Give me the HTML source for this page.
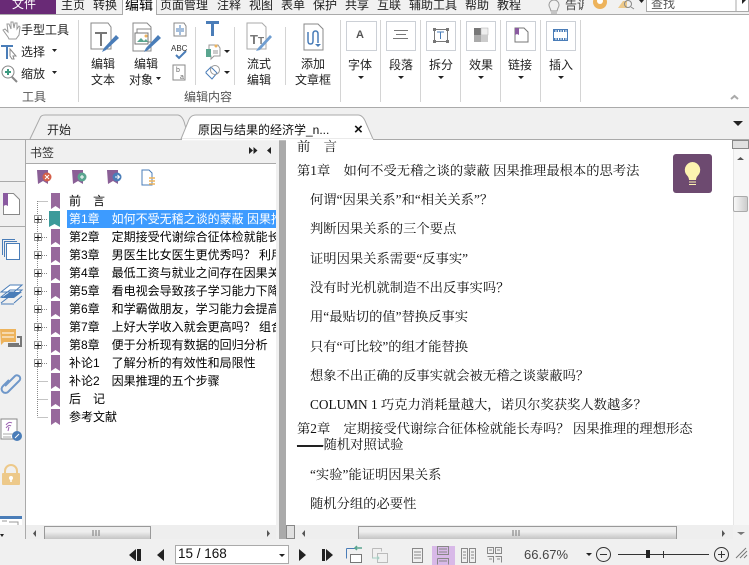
<!DOCTYPE html>
<html lang="zh"><head><meta charset="utf-8">
<style>
html,body{margin:0;padding:0;width:749px;height:565px;overflow:hidden;background:#f0f0f0}
#r{position:relative;width:749px;height:565px;overflow:hidden;font-family:"Liberation Sans","WenQuanYi Zen Hei","Noto Sans CJK SC",sans-serif;font-size:12px;color:#222}
.t{position:absolute;white-space:pre;line-height:14px;height:14px}
.c{transform:translateX(-50%)}
.b{position:absolute;background:#f0f0f0}
.p{font-family:"Liberation Serif","Noto Serif CJK SC",serif;font-size:13.3px;color:#111;line-height:16px;height:16px}
.k{color:#000;font-size:12px}
svg{position:absolute;left:0;top:0}
</style></head><body><div id="r">
<div class="b" style="left:0;top:0;width:749px;height:14px;background:#f1f1f1"></div>
<div class="b" style="left:0;top:14px;width:749px;height:1px;background:#aaa"></div>
<div class="b" style="left:0;top:0;width:56px;height:14px;background:#692a76"></div>
<div class="b" style="left:122px;top:0;width:35px;height:15px;background:#fff;border:solid #aaa;border-width:0 1px;box-sizing:border-box"></div>
<div class="b" style="left:0;top:15px;width:749px;height:92px;background:#fff"></div>
<div class="b" style="left:0;top:107px;width:749px;height:1px;background:#aaa"></div>
<div class="b" style="left:0;top:139px;width:749px;height:1px;background:#aaa"></div>
<div class="b" style="left:26px;top:164px;width:250px;height:361px;background:#fff"></div>
<div class="b" style="left:25px;top:139px;width:1px;height:400px;background:#aaa"></div>
<div class="b" style="left:26px;top:163px;width:250px;height:1px;background:#aaa"></div>
<div class="b" style="left:0;top:181px;width:26px;height:1px;background:#aaa"></div>
<div class="b" style="left:0;top:226px;width:26px;height:1px;background:#aaa"></div>
<div class="b" style="left:279px;top:140px;width:7px;height:399px;background:#aaa"></div>
<div class="b" style="left:286px;top:140px;width:447px;height:385px;background:#fff"></div>
<div class="b" style="left:67px;top:210px;width:209px;height:18px;background:#3d9bff"></div>
<div class="b" style="left:733px;top:140px;width:16px;height:385px;background:#f7f7f7;border-left:1px solid #e6e6e6;box-sizing:border-box"></div>
<div class="b" style="left:732px;top:140px;width:17px;height:9px;background:#e0e0e0;border:1px solid #888;box-sizing:border-box"></div>
<div class="b" style="left:733px;top:196px;width:15px;height:16px;background:linear-gradient(90deg,#f8f8f8,#ccc);border:1px solid #aaa;box-sizing:border-box;border-radius:2px"></div>
<div class="b" style="left:26px;top:525px;width:250px;height:14px;background:#eee"></div>
<div class="b" style="left:44px;top:526px;width:107px;height:13px;background:linear-gradient(#eee,#eee 40%,#c4c4c4);border:solid #999;border-width:1px 1px 0;box-sizing:border-box"></div>
<div class="b" style="left:286px;top:525px;width:463px;height:14px;background:#eee"></div>
<div class="b" style="left:286px;top:525px;width:9px;height:14px;background:#e0e0e0;border:1px solid #888;box-sizing:border-box"></div>
<div class="b" style="left:358px;top:526px;width:319px;height:13px;background:linear-gradient(#eee,#eee 40%,#c4c4c4);border:solid #999;border-width:1px 1px 0;box-sizing:border-box"></div>
<div class="b" style="left:733px;top:525px;width:16px;height:14px;background:#f0f0f0"></div>
<div class="b" style="left:432px;top:546px;width:23px;height:19px;background:#d8b9e8"></div>
<div class="b" style="left:175px;top:545px;width:114px;height:19px;background:#fff;border:1px solid #aaa;box-sizing:border-box"></div>
<div class="b" style="left:646px;top:0;width:103px;height:12px;background:#fff;border:solid #aaa;border-width:0 1px 1px;box-sizing:border-box"></div>

<svg width="749" height="565" viewBox="0 0 749 565" fill="none">
<!-- tabs -->
<path d="M30 139L40 118Q41 115 45 115H178Q183 116 185 125L186 128" stroke="#aaa" fill="#f0f0f0"/>
<path d="M181 139L188 122Q190 115 196 115H358Q363 115 366 123L373 139Z" stroke="#aaa" fill="#fff"/>
<path d="M182 139.500H373" stroke="#fff" stroke-width="1.500"/>
<path d="M733 121h10l-5 5z" fill="#222"/>
<!-- ribbon separators -->
<g stroke="#d4d4d4"><path d="M78.500 20V102M340.500 20V102M380.500 20V102M420.500 20V102M460.500 20V102M500.500 20V102M540.500 20V102M580.500 20V102"/><path d="M195.500 27V85M234.500 27V85M285.500 27V85"/></g>
<!-- hand -->
<path d="M8 37l-5-7 2-1 3 3-1-8 2 0 2 5 0-7 2 0 1 6 1-5 2 0 0 6 2-3 1 1-1 8-3 4h-7z" stroke="#999" fill="#fff"/>
<!-- T select -->
<path d="M1 45h12v2h-5v12h-2v-12h-5z" fill="#4a7db8"/><path d="M10 49l6 7-3 0 1 3-2 0-2-3z" stroke="#888" fill="#fff"/>
<!-- zoom -->
<circle cx="8" cy="72" r="6" stroke="#888" fill="#fff"/><path d="M5 72h6M8 69v6" stroke="#3d9a80" stroke-width="2"/><path d="M12 77l5 5" stroke="#888" stroke-width="2"/>
<!-- edit text -->
<path d="M91 23h17l3 4v22h-20z" stroke="#888" fill="#fff"/><path d="M95 32h12v2h-5v12h-2v-12h-5z" fill="#777"/>
<path d="M102 52l2-4 12-13 3 3-13 12z" fill="#4a7db8"/>
<!-- edit object -->
<path d="M133 23h14l4 4v24h-18z" stroke="#888" fill="#fff"/><path d="M137 29h14v13h-14z" stroke="#888" fill="#fff"/><path d="M135 33h13v11h-13z" stroke="#777" fill="#fff"/><path d="M137 42l4-4 3 3 2-2 2 3z" fill="#5aa58f"/><circle cx="146" cy="36" r="1.500" fill="#edb35c"/>
<path d="M144 52l2-4 12-13 3 3-13 12z" fill="#4a7db8"/>
<!-- small 3 -->
<path d="M174 23h10l2 3v10h-12z" stroke="#888" fill="#fff"/><path d="M176 29h8M176 31h8M180 25v3M180 32v3" stroke="#4a7db8"/>
<path d="M176 55l3 3 7-7" stroke="#4a7db8" stroke-width="2"/>
<text x="171" y="51" font-family="Liberation Sans" font-size="8" fill="#333">ABC</text>
<path d="M174 65h11v15h-12v-15z" stroke="#888" fill="#fff"/><text x="176" y="72" font-family="Liberation Sans" font-size="7" fill="#666">b</text><text x="180" y="79" font-family="Liberation Sans" font-size="7" fill="#666">a</text>
<!-- T big -->
<path d="M206 21h13v3h-5v12h-3v-12h-5z" fill="#4a7db8"/>
<path d="M209 45h9l2 3v8h-6l-3 3v-3h-2z" stroke="#999" fill="#fff"/><path d="M206 49h5v8h-5z" fill="#5aa58f"/><circle cx="216" cy="46" r="1.500" fill="#edb35c"/><path d="M213 51h5M213 53h5" stroke="#999"/>
<path d="M224 50h6l-3 3z" fill="#222"/>
<path d="M206 72l5-5 6 6-5 6-6-6z" stroke="#4a7db8" fill="#fff"/><circle cx="215" cy="70" r="4.500" stroke="#999"/>
<path d="M224 71h6l-3 3z" fill="#222"/>
<!-- flow -->
<path d="M247 23h15l4 4v22h-19z" stroke="#aaa" fill="#fff"/><text x="250" y="44" font-family="Liberation Sans" font-size="13" font-weight="bold" fill="#777">T</text><text x="258" y="44" font-family="Liberation Sans" font-size="10" font-weight="bold" fill="#777">T</text>
<path d="M256 51l2-3 12-13 2 2-12 13z" fill="#6f9dd0"/>
<!-- add text frame -->
<path d="M304 24h14l5 5v21h-19z" stroke="#888" fill="#fff"/><path d="M308 32v9q0 3 2.500 3t2.500-3v-7q0-3 2.500-3t2.500 3v9" stroke="#4a7db8" stroke-width="1.500"/><path d="M315 44h6l-3 3z" fill="#4a7db8"/>
<!-- ribbon box buttons -->
<g stroke="#ccd0d6" fill="#fff"><rect x="346.500" y="21.500" width="30" height="29"/><rect x="386.500" y="21.500" width="29" height="29"/><rect x="426.500" y="21.500" width="29" height="29"/><rect x="466.500" y="21.500" width="29" height="29"/><rect x="506.500" y="21.500" width="29" height="29"/><rect x="546.500" y="21.500" width="29" height="29"/></g>
<text x="356" y="38" font-family="Liberation Sans" font-size="11" font-weight="bold" fill="#555">A</text>
<path d="M394 30.500h14M396 34.500h10M393 38.500h15" stroke="#777"/>
<rect x="434.500" y="29.500" width="13" height="12" stroke="#777"/><path d="M433 28h3v3h-3zM446 28h3v3h-3zM433 40h3v3h-3zM446 40h3v3h-3z" fill="#777"/><path d="M437 32h7M440.500 32v7" stroke="#4a7db8"/>
<rect x="474" y="28" width="7" height="7" fill="#777"/><rect x="481" y="28" width="7" height="7" fill="#eee" stroke="#aaa" stroke-width=".5"/><rect x="474" y="35" width="7" height="7" fill="#aaa"/><rect x="481" y="35" width="7" height="7" fill="#ccc"/>
<path d="M515 28h9l4 4v10h-13z" stroke="#777" fill="#fff"/><path d="M515 28h4v7l-2-1-2 1z" fill="#8a5aa0"/>
<rect x="553.500" y="29.500" width="14" height="11" stroke="#4a7db8" fill="#fff"/><path d="M554 31h13M554 39h13" stroke="#4a7db8" stroke-width="2" stroke-dasharray="1.500 1"/>
<!-- dropdown arrows -->
<g fill="#222"><path d="M52 49h5l-2.500 3zM52 71h5l-2.500 3zM156 77h5l-2.500 3zM358 76h6l-3 3zM398 76h6l-3 3zM438 76h6l-3 3zM478 76h6l-3 3zM518 76h6l-3 3zM558 76h6l-3 3z"/></g>
<path d="M731 99l3.500-3 3.500 3" stroke="#aaa" stroke-width="2"/>
<!-- top right -->
<path d="M550 8a5 5 0 1 1 8 0l-1 3h-6zM551 13h6" stroke="#999"/>
<circle cx="600" cy="2" r="7" fill="#edb35c"/><circle cx="600" cy="1" r="3" fill="#fff"/>
<path d="M618 8l5-7h4v7z" fill="#edc98a"/><circle cx="628" cy="4" r="3.500" stroke="#888"/><path d="M631 7l3 2" stroke="#888"/><path d="M639 0h5l-2.500 3z" fill="#222"/>
<path d="M742 0h4l-4 4z" fill="#222"/>
<path d="M736 0v12" stroke="#aaa"/>
<!-- panel header -->
<path d="M249 147l4 3.500-4 3.500zM253.500 147l4 3.500-4 3.500zM271 147l-4 3.500 4 3.500z" fill="#222"/>
<!-- bookmark tool icons -->
<g fill="#8a5f96"><path d="M37 170h11v14l-5-3-5 3zM72 170h11v14l-5-3-5 3zM107 170h11v14l-5-3-5 3z"/></g>
<circle cx="47" cy="177" r="4.500" fill="#d5604a"/><path d="M45 175l4 4M49 175l-4 4" stroke="#fff"/>
<circle cx="82" cy="177" r="4.500" fill="#5aa58f"/><path d="M80 177h4M82 175v4" stroke="#fff"/>
<circle cx="117" cy="177" r="4.500" fill="#4a7db8"/><path d="M115 177h4M117.500 175l2 2-2 2" stroke="#fff"/>
<path d="M142 170h7l3 3v12h-10z" stroke="#4a7db8" fill="#fff"/><path d="M149 178h6M149 181h6M149 184h6" stroke="#edb35c" stroke-width="1.500"/>
<!-- left rail -->
<path d="M3.500 193.500h10l6 6v15h-16z" stroke="#888" fill="#fff"/><path d="M3 193h5v13l-2-1-3 1z" fill="#8a5aa0"/>
<path d="M2.500 255V239.500H15M4.500 257V241.500H17" stroke="#4a7db8"/><rect x="6.500" y="243.500" width="13" height="16" stroke="#4a7db8" fill="#fff"/>
<path d="M1 292l9-7h12l-8 7zM1 297l9-7h12l-8 7z" stroke="#4a7db8" fill="#fff"/><path d="M1 298l9-6h12l-8 6z" fill="#4a7db8"/><path d="M1 303l9-7M14 303l8-7M1 304h13" stroke="#4a7db8"/>
<path d="M0 329h16v13h-12l-3 3z" fill="#edb35c"/><path d="M2 333h12M2 337h12" stroke="#fff"/><path d="M17 337h4v9h-12v-2h10" stroke="#777" stroke-width="2"/>
<path d="M9 377l-6 6a3.500 3.500 0 0 0 5 6l11-11a3 3 0 0 0-4-5l-10 10" stroke="#6f97c9" stroke-width="2" transform="translate(0 3)"/>
<path d="M1 419h16v20h-16z" stroke="#888" fill="#fff"/><path d="M6 425q3-4 6-2M6 428q3-4 5-2M8 431l1-4" stroke="#9a5fb0"/><path d="M3 434h10M3 437h8" stroke="#aaa"/><circle cx="17" cy="436" r="5" fill="#4a7db8"/><path d="M15 438l4-4" stroke="#fff"/>
<path d="M5 475v-4a6 6 0 0 1 12 0v4" stroke="#edc98a" stroke-width="2"/><rect x="2" y="473" width="18" height="12" rx="1" fill="#edc98a"/><circle cx="11" cy="478" r="2" fill="#fff"/><path d="M11 479v3" stroke="#fff" stroke-width="1.500"/>
<rect x="0" y="516" width="22" height="9" fill="#4a7db8"/><rect x="0" y="519" width="22" height="6" fill="#fff"/><path d="M2 521h5M9 522h9v3" stroke="#999"/>
<path d="M0 534h4l-2 3z" fill="#222"/>
<!-- tree lines -->
<path d="M37.500 201V417M37.500 201.500H48M37.500 381.500H48M37.500 399.500H48M37.500 417.500H48" stroke="#888" stroke-dasharray="1 1"/>
<g stroke="#888" stroke-dasharray="1 1"><path d="M42 219.500h6M42 237.500h6M42 255.500h6M42 273.500h6M42 291.500h6M42 309.500h6M42 327.500h6M42 345.500h6M42 363.500h6"/></g>
<g stroke="#999" fill="#fff"><rect x="34.500" y="215.500" width="7" height="7"/><rect x="34.500" y="233.500" width="7" height="7"/><rect x="34.500" y="251.500" width="7" height="7"/><rect x="34.500" y="269.500" width="7" height="7"/><rect x="34.500" y="287.500" width="7" height="7"/><rect x="34.500" y="305.500" width="7" height="7"/><rect x="34.500" y="323.500" width="7" height="7"/><rect x="34.500" y="341.500" width="7" height="7"/><rect x="34.500" y="359.500" width="7" height="7"/></g>
<path d="M35 219.500h6M38 216.500v6M35 237.500h6M38 234.500v6M35 255.500h6M38 252.500v6M35 273.500h6M38 270.500v6M35 291.500h6M38 288.500v6M35 309.500h6M38 306.500v6M35 327.500h6M38 324.500v6M35 345.500h6M38 342.500v6M35 363.500h6M38 360.500v6" stroke="#111"/>
<!-- bookmarks -->
<g fill="#97689c"><path d="M51 193h9v16l-4.500-3-4.500 3zM51 229h9v16l-4.500-3-4.500 3zM51 247h9v16l-4.500-3-4.500 3zM51 265h9v16l-4.500-3-4.500 3zM51 283h9v16l-4.500-3-4.500 3zM51 301h9v16l-4.500-3-4.500 3zM51 319h9v16l-4.500-3-4.500 3zM51 337h9v16l-4.500-3-4.500 3zM51 355h9v16l-4.500-3-4.500 3zM51 373h9v16l-4.500-3-4.500 3zM51 391h9v16l-4.500-3-4.500 3zM51 409h9v16l-4.500-3-4.500 3z"/></g>
<path d="M49 211h11v16l-5.500-3-5.500 3z" fill="#3b9a9a"/>
<!-- scroll arrows -->
<g fill="#555"><path d="M36 530v7l-3-3.500zM267 530v7l3-3.500zM305 530v7l-3-3.500zM722 530v7l3-3.500z"/><path d="M737 160h7l-3.500-3z"/></g>
<path d="M737 532h8l-4 3z" fill="#777"/>
<path d="M93 530v6M96 530v6M99 530v6M513 530v6M516 530v6M519 530v6" stroke="#777"/>
<!-- idea -->
<rect x="673" y="154" width="39" height="39" rx="3" fill="#6d4a70"/>
<path d="M692.500 162a8 8 0 0 0-5 14c1 1 1.500 3 1.500 4h7c0-1 .5-3 1.500-4a8 8 0 0 0-5-14z" fill="#fdf3b0"/><path d="M689 182h7M689 184.500h7" stroke="#fdf3b0"/>
<!-- status bar nav -->
<g fill="#222"><path d="M129 555l7-6v12zM137 549h4v12h-4zM164 549v12l-7-6zM299 549l7 6-7 6zM322 549h3v12h-3zM326 549l7 6-7 6z"/></g>
<path d="M279 554h6l-3 3z" fill="#222"/>
<path d="M346.500 548.500h9M346.500 548.500v10" stroke="#4a7db8"/><rect x="350.500" y="554.500" width="11" height="8" stroke="#777" fill="#fff"/><path d="M356 548h6M357 546l-2 2 2 2" stroke="#5aa58f" stroke-width="1.500"/>
<path d="M372.500 548.500h9v3M372.500 548.500v10" stroke="#bbb"/><rect x="377.500" y="553.500" width="10" height="9" stroke="#bbb"/><path d="M372 558h7M377 556l2 2-2 2" stroke="#a5cfc4"/>
<g stroke="#888" fill="none"><rect x="412.500" y="548.500" width="10" height="14"/><path d="M414 552h7M414 555h7M414 558h7"/>
<path d="M437.500 546.500h11v8h-11zM437.500 558.500h11v6M437.500 558.500v6"/><path d="M439 549h8M439 552h8M439 561h8"/>
<rect x="461.500" y="548.500" width="6" height="14"/><rect x="469.500" y="548.500" width="6" height="14"/><path d="M463 552h3M463 555h3M463 558h3M471 552h3M471 555h3M471 558h3"/>
<path d="M487.500 547.500h6v6h-6zM495.500 547.500h6v6h-6zM487.500 556.500h6v6M495.500 556.500h6v6"/><path d="M489 550h3M497 550h3M489 559h3M497 559h3"/></g>
<path d="M586 553h6l-3 3z" fill="#222"/>
<circle cx="603.500" cy="554.500" r="7" stroke="#333" fill="none"/><path d="M600 554.500h7" stroke="#333"/>
<path d="M618 554.500h91" stroke="#333"/><rect x="646" y="550" width="4" height="8" fill="#222"/><path d="M663.500 551v7" stroke="#333"/>
<circle cx="721.500" cy="554.500" r="7" stroke="#333" fill="none"/><path d="M718 554.500h7M721.500 551v7" stroke="#333"/>
<path d="M736 558l10-10M740 558l7-7M744 558l3-3" stroke="#777"/>
</svg>

<!-- menu -->
<span class="t" style="left:12px;top:-3px;color:#fff;font-size:12px">文件</span>
<span class="t" style="left:61px;top:-2px">主页</span><span class="t" style="left:93px;top:-2px">转换</span><span class="t" style="left:125px;top:-2px;color:#000;font-size:14px">编辑</span><span class="t" style="left:160px;top:-2px">页面管理</span><span class="t" style="left:217px;top:-2px">注释</span><span class="t" style="left:249px;top:-2px">视图</span><span class="t" style="left:281px;top:-2px">表单</span><span class="t" style="left:313px;top:-2px">保护</span><span class="t" style="left:345px;top:-2px">共享</span><span class="t" style="left:377px;top:-2px">互联</span><span class="t" style="left:409px;top:-2px">辅助工具</span><span class="t" style="left:465px;top:-2px">帮助</span><span class="t" style="left:497px;top:-2px">教程</span>
<span class="t" style="left:565px;top:-2px;color:#444;width:19px;overflow:hidden">告诉</span>
<span class="t" style="left:651px;top:-3px;color:#555">查找</span>
<!-- ribbon text -->
<span class="t" style="left:21px;top:23px">手型工具</span><span class="t" style="left:21px;top:45px">选择</span><span class="t" style="left:21px;top:67px">缩放</span>
<span class="t c" style="left:34px;top:90px;color:#555">工具</span><span class="t c" style="left:208px;top:90px;color:#555">编辑内容</span>
<span class="t c" style="left:103px;top:57px">编辑</span><span class="t c" style="left:103px;top:73px">文本</span>
<span class="t c" style="left:146px;top:57px">编辑</span><span class="t" style="left:129px;top:73px">对象</span>
<span class="t c" style="left:259px;top:57px">流式</span><span class="t c" style="left:259px;top:73px">编辑</span>
<span class="t c" style="left:313px;top:57px">添加</span><span class="t c" style="left:313px;top:73px">文章框</span>
<span class="t c" style="left:360px;top:58px">字体</span><span class="t c" style="left:401px;top:58px">段落</span><span class="t c" style="left:441px;top:58px">拆分</span><span class="t c" style="left:481px;top:58px">效果</span><span class="t c" style="left:520px;top:58px">链接</span><span class="t c" style="left:561px;top:58px">插入</span>
<!-- tabs -->
<span class="t" style="left:47px;top:123px">开始</span>
<span class="t" style="left:198px;top:123px;color:#111">原因与结果的经济学_n...</span>
<span class="t" style="left:354px;top:123px;font-weight:bold;color:#111;font-size:15px">×</span>
<span class="t" style="left:30px;top:146px;color:#333">书签</span>
<!-- bookmark rows -->
<span class="t k" style="left:69px;top:194px">前　言</span>
<span class="t" style="left:69px;top:212px;color:#fff;width:207px;overflow:hidden">第1章　如何不受无稽之谈的蒙蔽 因果推理最根本的思考法</span>
<span class="t k" style="left:69px;top:230px;width:207px;overflow:hidden">第2章　定期接受代谢综合征体检就能长寿吗</span>
<span class="t k" style="left:69px;top:248px;width:207px;overflow:hidden">第3章　男医生比女医生更优秀吗？ 利用断点</span>
<span class="t k" style="left:69px;top:266px;width:207px;overflow:hidden">第4章　最低工资与就业之间存在因果关系吗</span>
<span class="t k" style="left:69px;top:284px;width:207px;overflow:hidden">第5章　看电视会导致孩子学习能力下降吗</span>
<span class="t k" style="left:69px;top:302px;width:207px;overflow:hidden">第6章　和学霸做朋友，学习能力会提高吗</span>
<span class="t k" style="left:69px;top:320px;width:207px;overflow:hidden">第7章　上好大学收入就会更高吗？ 组合匹配</span>
<span class="t k" style="left:69px;top:338px">第8章　便于分析现有数据的回归分析</span>
<span class="t k" style="left:69px;top:356px">补论1　了解分析的有效性和局限性</span>
<span class="t k" style="left:69px;top:374px">补论2　因果推理的五个步骤</span>
<span class="t k" style="left:69px;top:392px">后　记</span>
<span class="t k" style="left:69px;top:410px">参考文献</span>
<!-- page text -->
<span class="t p" style="left:297px;top:139px">前　言</span>
<span class="t p" style="left:297px;top:163px">第1章　如何不受无稽之谈的蒙蔽 因果推理最根本的思考法</span>
<span class="t p" style="left:310px;top:192px">何谓“因果关系”和“相关关系”？</span>
<span class="t p" style="left:310px;top:221px">判断因果关系的三个要点</span>
<span class="t p" style="left:310px;top:251px">证明因果关系需要“反事实”</span>
<span class="t p" style="left:310px;top:280px">没有时光机就制造不出反事实吗？</span>
<span class="t p" style="left:310px;top:309px">用“最贴切的值”替换反事实</span>
<span class="t p" style="left:310px;top:339px">只有“可比较”的组才能替换</span>
<span class="t p" style="left:310px;top:368px">想象不出正确的反事实就会被无稽之谈蒙蔽吗？</span>
<span class="t p" style="left:310px;top:397px">COLUMN 1 巧克力消耗量越大，诺贝尔奖获奖人数越多？</span>
<span class="t p" style="left:297px;top:421px">第2章　定期接受代谢综合征体检就能长寿吗？ 因果推理的理想形态</span>
<span class="t p" style="left:297px;top:437px">——随机对照试验</span>
<div class="b" style="left:297px;top:445px;width:26px;height:2px;background:#222"></div>
<span class="t p" style="left:310px;top:467px">“实验”能证明因果关系</span>
<span class="t p" style="left:310px;top:496px">随机分组的必要性</span>
<!-- status -->
<span class="t" style="left:178px;top:547px;font-size:13.500px;color:#111">15 / 168</span>
<span class="t" style="left:524px;top:548px;font-size:13px;color:#444">66.67%</span>
</div></body></html>
